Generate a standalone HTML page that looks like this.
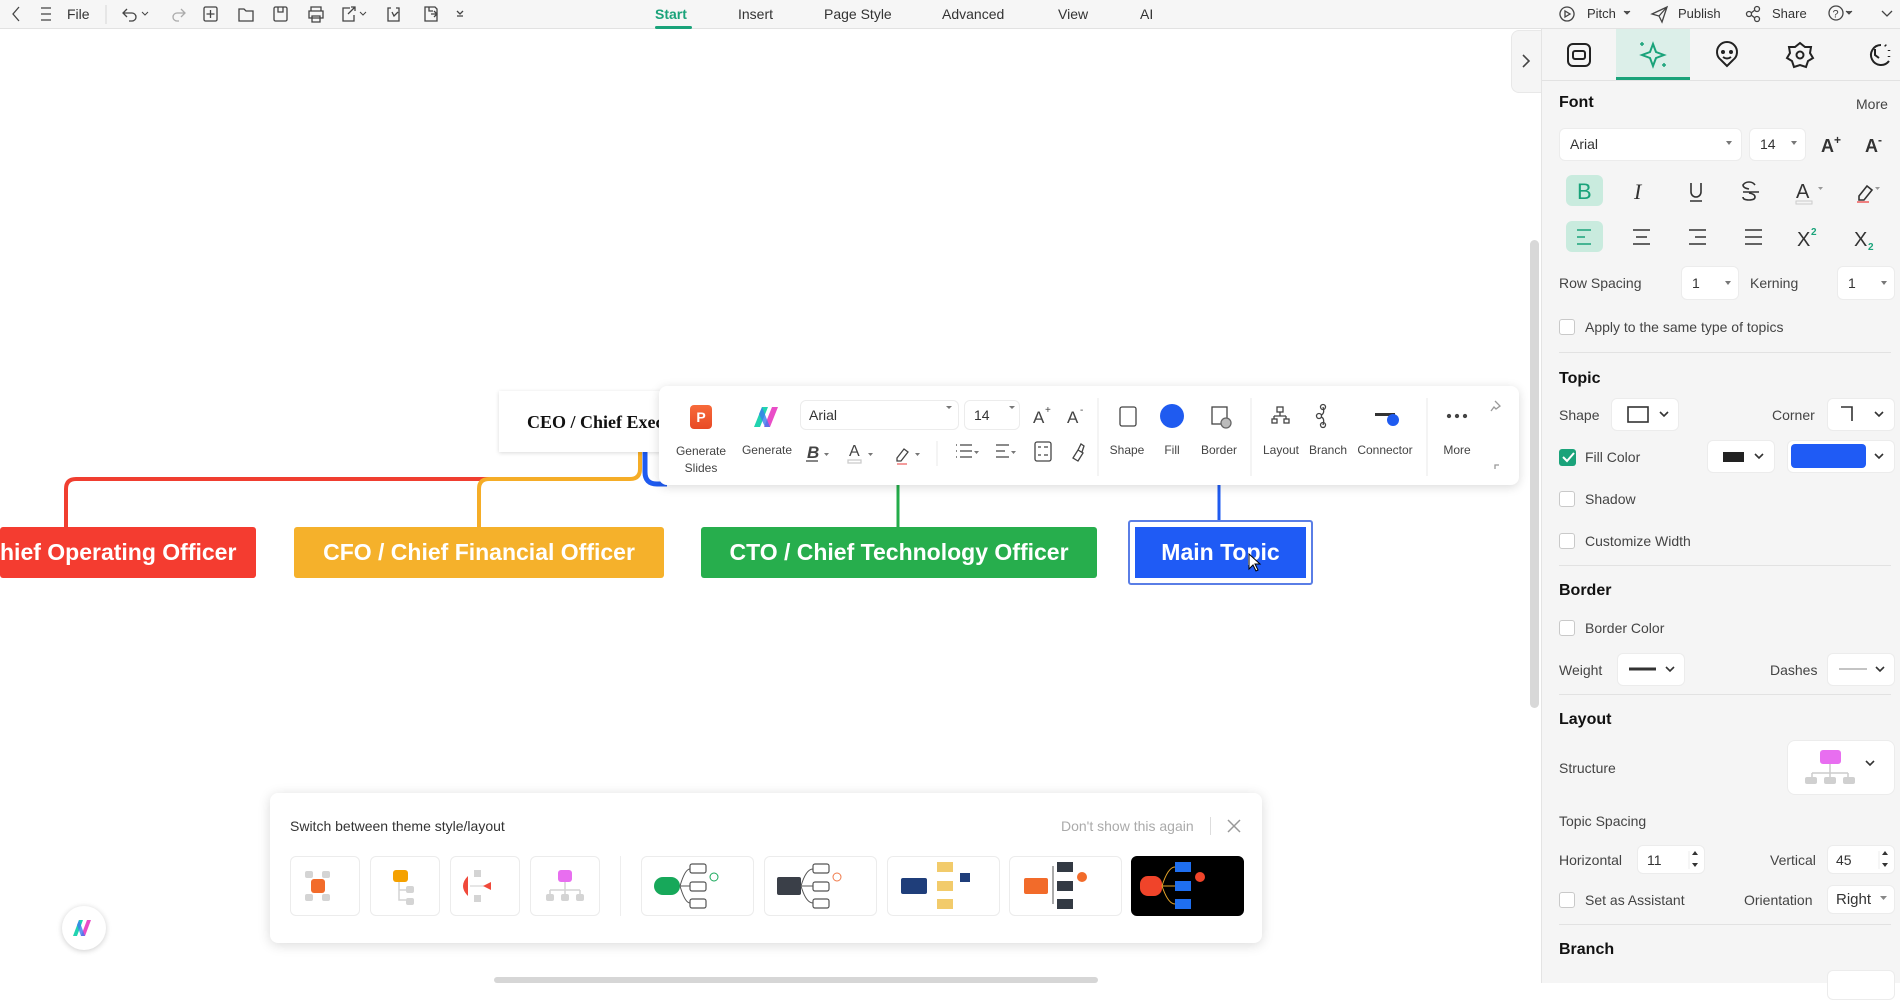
<!DOCTYPE html>
<html><head><meta charset="utf-8">
<style>
*{box-sizing:border-box;margin:0;padding:0}
body{width:1900px;height:983px;overflow:hidden;background:#fff;font-family:"Liberation Sans",Arial,sans-serif;position:relative;color:#333}
.a{position:absolute}
.top{left:0;top:0;width:1900px;height:29px;background:#f6f6f6;border-bottom:1px solid #e2e2e2}
.t{position:absolute;font-size:14px;color:#333;top:6px;white-space:nowrap}
svg{position:absolute;overflow:visible}
.panel{left:1541px;top:29px;width:359px;height:954px;background:#f5f5f5;border-left:1px solid #e4e4e4}
.p{position:absolute;font-size:14px;color:#444;white-space:nowrap}
.h{position:absolute;font-size:16px;font-weight:bold;color:#111}
.box{position:absolute;background:#fff;border:1px solid #ececec;border-radius:6px}
.cb{position:absolute;width:16px;height:16px;border:1px solid #c9c9c9;border-radius:3px;background:#fff}
.sep{position:absolute;left:1559px;width:332px;height:1px;background:#e2e2e2}
.topic{position:absolute;top:527px;height:51px;border-radius:3px;color:#fff;font-weight:bold;font-size:23px;line-height:51px;text-align:center;white-space:nowrap;overflow:hidden}
.tb{position:absolute;font-size:12px;color:#444;text-align:center;white-space:nowrap}
.th{position:absolute;top:856px;height:60px;border:1px solid #ececec;border-radius:6px;background:#fff}
</style></head><body>

<div class="a top"></div>
<svg width="1900" height="29" style="left:0;top:0" fill="none" stroke="#444" stroke-width="1.3">
<path d="M19 7l-6 7 6 7"/>
<path d="M41 8h10M41 14h10M41 20h10"/>
<line x1="106" y1="5" x2="106" y2="24" stroke="#ddd"/>
<path d="M127 9l-4 4 4 4M123 13h9a4 4 0 0 1 0 8h-3"/><path d="M142 12l3 3 3-3" stroke-width="1"/>
<path d="M181 9l4 4-4 4M185 13h-8a4 4 0 0 0 0 8h2" stroke="#aaa"/>
<rect x="204" y="7" width="13" height="14" rx="1.5"/><path d="M210.5 10v8M206.5 14h8"/>
<path d="M239 9h5l2 2h7v10h-14z"/>
<rect x="274" y="7" width="13" height="14" rx="1.5"/><path d="M278 7v5h5V7"/>
<path d="M311 11V7h10v4M309 11h14v7h-14zM312 16h8v6h-8z"/>
<path d="M350 8h-7v13h11v-6M348 14l7-7M351 7h4v4"/><path d="M360 12l3 3 3-3" stroke-width="1"/>
<path d="M391 8h-3v13h11V8h-3M392 12l2 4 4-4"/>
<path d="M425 7h10l2 2v12h-12zM429 7v4h4M431 14h6M434 11l3 3-3 3"/>
<path d="M457 11l3 3 3-3M457 16h6"/>
<path d="M1567 7a7 7 0 1 0 0.01 0z"/><path d="M1565 11v6l5-3z"/>
<path d="M1624 11l3 3 3-3" fill="#555" stroke-width="1"/>
<path d="M1652 14l15-7-5 15-3-6z M1659 16l8-9"/>
<circle cx="1749" cy="14" r="2.5"/><circle cx="1757" cy="9" r="2.5"/><circle cx="1757" cy="19" r="2.5"/><path d="M1751 13l4-3M1751 15l4 3"/>
<circle cx="1836" cy="13" r="7"/><text x="1832.5" y="17.5" font-size="11" fill="#444" stroke="none">?</text><path d="M1846 11l3 3 3-3" fill="#555" stroke-width="1"/>
<path d="M1882 11l5 5 5-5"/>
</svg>
<div class="t" style="left:67px">File</div>
<div class="t" style="left:655px;color:#1aa37a;font-weight:bold">Start</div>
<div class="a" style="left:655px;top:26px;width:37px;height:3px;background:#1aa37a;border-radius:2px"></div>
<div class="t" style="left:738px">Insert</div>
<div class="t" style="left:824px">Page Style</div>
<div class="t" style="left:942px">Advanced</div>
<div class="t" style="left:1058px">View</div>
<div class="t" style="left:1140px">AI</div>
<div class="t" style="left:1587px;font-size:13px">Pitch</div>
<div class="t" style="left:1678px;font-size:13px">Publish</div>
<div class="t" style="left:1772px;font-size:13px">Share</div>

<svg width="1540" height="983" style="left:0;top:0" fill="none" stroke-width="4">
<path d="M66 527V489q0-10 10-10H630" stroke="#f03e30"/>
<path d="M479 527V489q0-10 10-10H630q10 0 10-10v-17" stroke="#f5ad27"/>
<path d="M645 452v20q0 12 12 12h10" stroke="#1f5bf0" stroke-width="5"/>
<path d="M898 484v43" stroke="#23ac4a" stroke-width="3"/>
<path d="M1219 484v36" stroke="#1f5bf0" stroke-width="3"/>
</svg>

<div class="a" style="left:499px;top:391px;width:170px;height:61px;background:#fff;box-shadow:0 1px 4px rgba(0,0,0,.15)"></div>
<div class="a" style="left:527px;top:412px;font-family:'Liberation Serif',serif;font-weight:bold;font-size:18px;color:#111;white-space:nowrap">CEO / Chief Exec</div>

<div class="topic" style="left:0;width:256px;background:#f43c30;text-align:right;padding-right:26px">hief Operating Officer</div>
<div class="topic" style="left:294px;width:370px;background:#f5b12b">CFO / Chief Financial Officer</div>
<div class="topic" style="left:701px;width:396px;background:#27ae4d">CTO / Chief Technology Officer</div>
<div class="a" style="left:1128px;top:520px;width:185px;height:65px;border:2px solid #5a7ee6;border-radius:3px"></div>
<div class="topic" style="left:1135px;width:171px;background:#1f5bf5;border-radius:0">Main Topic</div>
<svg width="20" height="20" style="left:1248px;top:553px"><path d="M1 1v15l4-4 3 6 2-1-3-6h5z" fill="#fff" stroke="#000" stroke-width="1"/></svg>

<div class="a" style="left:659px;top:386px;width:860px;height:99px;background:#fff;border-radius:8px;box-shadow:0 2px 10px rgba(0,0,0,.15)"></div>
<div class="a" style="left:690px;top:405px;width:22px;height:24px;background:linear-gradient(#f76a3a,#e84a25);border-radius:4px;color:#fff;font-weight:bold;font-size:14px;text-align:center;line-height:24px">P</div>
<svg width="30" height="24" style="left:752px;top:405px"><path d="M2 22L10 2h6L8 22z" fill="#21d3b0"/><path d="M12 22L20 2h6l-8 20z" fill="#e94dc7"/><path d="M10 2l8 20h-5L7 9z" fill="#3b7cf0" opacity=".8"/></svg>
<div class="box" style="left:800px;top:400px;width:159px;height:30px;border-radius:6px"></div>
<div class="p" style="left:809px;top:407px;font-size:14px;color:#333">Arial</div>
<div class="box" style="left:964px;top:400px;width:56px;height:30px;border-radius:6px"></div>
<div class="p" style="left:974px;top:407px;color:#333">14</div>
<svg width="900" height="100" style="left:659px;top:386px" fill="none" stroke="#444" stroke-width="1.3">
<path d="M287 20h6l-3 3zM350 20h6l-3 3z" fill="#777" stroke="none"/>
<text x="374" y="37" font-size="17" fill="#444" stroke="none" font-family="Liberation Sans">A</text><text x="386" y="27" font-size="10" fill="#444" stroke="none">+</text>
<text x="408" y="37" font-size="17" fill="#444" stroke="none" font-family="Liberation Sans">A</text><text x="421" y="27" font-size="10" fill="#444" stroke="none">-</text>
<line x1="439" y1="12" x2="439" y2="90" stroke="#eee"/>
<rect x="461" y="21" width="16" height="19" rx="2"/>
<circle cx="513" cy="30" r="12" fill="#1f5bf0" stroke="none"/>
<rect x="553" y="21" width="15" height="17"/><circle cx="567" cy="37" r="5" fill="#bbb" stroke="#666"/>
<line x1="592" y1="12" x2="592" y2="90" stroke="#eee"/>
<rect x="618" y="21" width="6" height="5"/><path d="M621 26v4M615 30h12M615 30v3M627 30v3"/><rect x="613" y="33" width="5" height="4"/><rect x="625" y="33" width="5" height="4"/>
<circle cx="664" cy="21" r="2.5"/><circle cx="664" cy="39" r="2.5"/><circle cx="660" cy="30" r="2.5"/><path d="M662 29q4-1 2-8M662 31q4 1 2 8"/>
<rect x="716" y="27" width="20" height="3" fill="#333" stroke="none"/><circle cx="734" cy="34" r="6" fill="#1f5bf0" stroke="none"/>
<line x1="768" y1="12" x2="768" y2="90" stroke="#eee"/>
<circle cx="790" cy="30" r="1.5" fill="#444"/><circle cx="798" cy="30" r="1.5" fill="#444"/><circle cx="806" cy="30" r="1.5" fill="#444"/>
<path d="M836 15l5 5-4 3-2-2-3 4" stroke="#999"/>
<path d="M836 83v-4h4" stroke="#999"/>
<text x="148" y="72" font-size="17" font-weight="bold" font-style="italic" fill="#444" stroke="none">B</text><path d="M147 75h12"/><path d="M165 67h5l-2.5 3z" fill="#777" stroke="none"/>
<text x="190" y="70" font-size="16" fill="#444" stroke="none">A</text><rect x="189" y="74" width="13" height="3" stroke="#ccc"/><path d="M209 67h5l-2.5 3z" fill="#777" stroke="none"/>
<path d="M238 72l7-9 4 3-7 9h-4z"/><path d="M238 78h10" stroke="#e66"/><path d="M256 67h5l-2.5 3z" fill="#777" stroke="none"/>
<line x1="278" y1="55" x2="278" y2="80" stroke="#eee"/>
<path d="M301 59h12M301 65h12M301 71h12M297 59h1M297 65h1M297 71h1"/><path d="M315 65h5l-2.5 3z" fill="#777" stroke="none"/>
<path d="M337 59h13M337 65h9M337 71h13"/><path d="M352 65h5l-2.5 3z" fill="#777" stroke="none"/>
<rect x="376" y="56" width="16" height="19" rx="2"/><path d="M379 61h3M385 61h4M379 69h3M385 69h4"/>
<path d="M414 72l5-8 5 3-5 8zM419 64l3-6 3 2-2 6"/>
</svg>
<div class="tb" style="left:671px;top:443px;line-height:17px;width:60px">Generate<br>Slides</div>
<div class="tb" style="left:737px;top:443px;width:60px">Generate</div>
<div class="tb" style="left:1107px;top:443px;width:40px">Shape</div>
<div class="tb" style="left:1152px;top:443px;width:40px">Fill</div>
<div class="tb" style="left:1194px;top:443px;width:50px">Border</div>
<div class="tb" style="left:1258px;top:443px;width:46px">Layout</div>
<div class="tb" style="left:1306px;top:443px;width:44px">Branch</div>
<div class="tb" style="left:1352px;top:443px;width:66px">Connector</div>
<div class="tb" style="left:1437px;top:443px;width:40px">More</div>

<div class="a" style="left:1530px;top:240px;width:9px;height:468px;background:#d8d8d8;border-radius:5px"></div>
<div class="a" style="left:1511px;top:30px;width:30px;height:63px;background:#f5f5f5;border:1px solid #e8e8e8;border-right:none;border-radius:8px 0 0 8px"></div>
<svg width="20" height="20" style="left:1518px;top:52px"><path d="M5 3l6 6-6 6" fill="none" stroke="#444" stroke-width="1.6"/></svg>
<div class="a" style="left:494px;top:977px;width:604px;height:6px;background:#d6d6d6;border-radius:3px"></div>

<div class="a" style="left:62px;top:906px;width:44px;height:44px;background:#fff;border-radius:50%;box-shadow:0 1px 6px rgba(0,0,0,.2)"></div>
<svg width="24" height="20" style="left:72px;top:918px"><path d="M1 18L7 2h4L5 18z" fill="#21d3b0"/><path d="M9 18L15 2h4l-6 16z" fill="#e94dc7"/><path d="M7 2l6 16h-4L5 7z" fill="#3b7cf0" opacity=".8"/></svg>

<div class="a" style="left:270px;top:793px;width:992px;height:150px;background:#fff;border-radius:8px;box-shadow:0 2px 12px rgba(0,0,0,.15)"></div>
<div class="p" style="left:290px;top:818px;font-size:14px;color:#333">Switch between theme style/layout</div>
<div class="p" style="left:1061px;top:818px;font-size:14px;color:#aaa">Don't show this again</div>
<div class="a" style="left:1210px;top:817px;width:1px;height:18px;background:#ddd"></div>
<svg width="16" height="16" style="left:1226px;top:818px"><path d="M2 2l12 12M14 2L2 14" stroke="#999" stroke-width="1.5"/></svg>
<div class="th" style="left:290px;width:70px"></div>
<div class="th" style="left:370px;width:70px"></div>
<div class="th" style="left:450px;width:70px"></div>
<div class="th" style="left:530px;width:70px"></div>
<div class="a" style="left:620px;top:856px;width:1px;height:60px;background:#eee"></div>
<div class="th" style="left:641px;width:113px"></div>
<div class="th" style="left:764px;width:113px"></div>
<div class="th" style="left:887px;width:113px"></div>
<div class="th" style="left:1009px;width:113px"></div>
<div class="th" style="left:1131px;width:113px;background:#000;border-color:#000"></div>
<svg width="1000" height="60" style="left:270px;top:856px" fill="none">
<g fill="#d4d4d4"><rect x="35" y="15" width="8" height="7" rx="2"/><rect x="52" y="15" width="8" height="7" rx="2"/><rect x="35" y="38" width="8" height="7" rx="2"/><rect x="52" y="38" width="8" height="7" rx="2"/></g>
<rect x="41" y="23" width="14" height="14" rx="3" fill="#f26b2a"/>
<g transform="translate(28 0)"><rect x="95" y="14" width="15" height="12" rx="3" fill="#f5a100"/><g fill="#d4d4d4"><rect x="108" y="30" width="8" height="7" rx="2"/><rect x="108" y="42" width="8" height="7" rx="2"/></g><path d="M101 26v18h7M101 34h7" stroke="#d4d4d4" stroke-width="1.5"/></g>
<path d="M198 20q-10 10 0 20z" fill="#f0493a"/><path d="M200 30h20" stroke="#ccc"/><path d="M213 30l8-4v8z" fill="#f0493a"/><rect x="204" y="14" width="7" height="7" fill="#d4d4d4"/><rect x="204" y="39" width="7" height="7" fill="#d4d4d4"/>
<rect x="288" y="14" width="14" height="12" rx="3" fill="#e86ef0"/><path d="M295 26v8M280 34h30M280 34v4M295 34v4M310 34v4" stroke="#d4d4d4" stroke-width="1.5"/><g fill="#d4d4d4"><rect x="276" y="38" width="8" height="7" rx="2"/><rect x="291" y="38" width="8" height="7" rx="2"/><rect x="306" y="38" width="8" height="7" rx="2"/></g>
<rect x="384" y="21" width="26" height="18" rx="9" fill="#17a85a"/><g stroke="#555" stroke-width="1.2"><rect x="420" y="8" width="16" height="9" rx="2"/><rect x="420" y="26" width="16" height="9" rx="2"/><rect x="420" y="43" width="16" height="9" rx="2"/></g><path d="M410 30q5-17 10-17M410 30h10M410 30q5 17 10 17" stroke="#555"/><circle cx="444" cy="21" r="4" stroke="#17a85a"/>
<rect x="507" y="21" width="24" height="18" rx="2" fill="#3a3f48"/><g stroke="#555" stroke-width="1.2"><rect x="543" y="8" width="16" height="9" rx="2"/><rect x="543" y="26" width="16" height="9" rx="2"/><rect x="543" y="43" width="16" height="9" rx="2"/></g><path d="M531 30q5-17 12-17M531 30h12M531 30q5 17 12 17" stroke="#555"/><circle cx="567" cy="21" r="4" stroke="#f07a4a"/>
<rect x="631" y="22" width="26" height="16" rx="2" fill="#1f3e7a"/><g fill="#f2cb6b"><rect x="667" y="6" width="16" height="10"/><rect x="667" y="25" width="16" height="10"/><rect x="667" y="43" width="16" height="10"/></g><rect x="690" y="17" width="10" height="9" fill="#1f3e7a"/>
<rect x="754" y="22" width="24" height="16" rx="2" fill="#f26b2a"/><g fill="#333a44"><rect x="787" y="6" width="16" height="10"/><rect x="787" y="25" width="16" height="10"/><rect x="787" y="43" width="16" height="10"/></g><path d="M783 10v38" stroke="#555"/><circle cx="812" cy="21" r="5" fill="#f26b2a"/>
<rect x="870" y="20" width="22" height="20" rx="8" fill="#f0442a"/><g fill="#1f6ff0"><rect x="905" y="6" width="16" height="10"/><rect x="905" y="25" width="16" height="10"/><rect x="905" y="43" width="16" height="10"/></g><path d="M892 30q6-19 13-19M892 30h13M892 30q6 18 13 18" stroke="#e6a52a"/><circle cx="930" cy="21" r="5" fill="#f0442a"/>
</svg>

<div class="a panel"></div>
<div class="a" style="left:1616px;top:29px;width:74px;height:51px;background:#dcefe9"></div>
<div class="a" style="left:1616px;top:77px;width:74px;height:3px;background:#1aa37a"></div>
<div class="a" style="left:1542px;top:80px;width:358px;height:1px;background:#e2e2e2"></div>
<svg width="360" height="50" style="left:1541px;top:30px" fill="none" stroke="#222" stroke-width="2">
<rect x="27" y="14" width="22" height="22" rx="5"/><rect x="32" y="21" width="12" height="8" rx="2"/>
<path d="M112 14l3 8 8 3-8 3-3 8-3-8-8-3 8-3z" stroke="#1aa37a"/><path d="M101 12v4M99 14h4M123 33v4M121 35h4" stroke="#1aa37a" stroke-width="1.5"/>
<path d="M186 36l-6-6a10 10 0 1 1 12 0z"/><circle cx="182" cy="22" r="1" fill="#222"/><circle cx="190" cy="22" r="1" fill="#222"/><path d="M182 27q4 3 8 0"/>
<path d="M259 13l5 4 6 0-1 6 3 5-5 3-2 6-6-2-6 2-2-6-5-3 3-5-1-6 6 0z"/><circle cx="259" cy="25" r="3.5"/>
<path d="M340 15a10 10 0 1 0 8 16"/><path d="M334 19v6l4 3"/><path d="M344 15l1 1M348 20v1M348 26v1" stroke-width="2.5"/>
</svg>

<div class="h" style="left:1559px;top:94px">Font</div>
<div class="p" style="left:1856px;top:96px">More</div>
<div class="box" style="left:1559px;top:128px;width:183px;height:33px"></div>
<div class="p" style="left:1570px;top:136px;color:#333">Arial</div>
<div class="box" style="left:1749px;top:128px;width:57px;height:33px"></div>
<div class="p" style="left:1760px;top:136px;color:#333">14</div>
<svg width="360" height="60" style="left:1541px;top:128px"><path d="M185 13h6l-3 4zM250 13h6l-3 4z" fill="#777"/>
<text x="280" y="24" font-size="18" font-weight="bold" fill="#333">A</text><text x="293" y="16" font-size="12" font-weight="bold" fill="#333">+</text>
<text x="324" y="24" font-size="18" font-weight="bold" fill="#333">A</text><text x="337" y="16" font-size="12" font-weight="bold" fill="#333">-</text></svg>

<div class="a" style="left:1566px;top:175px;width:37px;height:31px;background:#c9ebde;border-radius:6px"></div>
<div class="a" style="left:1566px;top:221px;width:37px;height:31px;background:#c9ebde;border-radius:6px"></div>
<svg width="360" height="110" style="left:1541px;top:170px" fill="none" stroke="#333" stroke-width="1.6">
<text x="36" y="29" font-size="22" fill="#1aa37a" stroke="none" font-family="Liberation Sans">B</text>
<text x="93" y="29" font-size="22" font-style="italic" fill="#333" stroke="none" font-family="Liberation Serif">I</text>
<path d="M150 13v9a5 5 0 0 0 10 0v-9M149 31h12"/>
<path d="M214 15q-2-3-6-3t-6 3q0 3 6 4M202 22h16M208 23q6 1 6 4t-6 3-6-3"/>
<text x="255" y="28" font-size="20" fill="#333" stroke="none">A</text><rect x="255" y="31" width="16" height="3" stroke="#ccc" stroke-width="1"/><path d="M277 17h5l-2.5 3z" fill="#999" stroke="none"/>
<path d="M318 26l8-10 5 4-8 10h-5z"/><path d="M316 32h12" stroke="#e66"/><path d="M334 17h5l-2.5 3z" fill="#999" stroke="none"/>
<path d="M36 60h14M36 67h8M36 74h14" stroke="#1aa37a"/>
<path d="M92 60h17M95 67h11M92 74h17"/>
<path d="M148 60h17M154 67h11M148 74h17"/>
<path d="M204 60h17M204 67h17M204 74h17"/>
<text x="256" y="76" font-size="20" fill="#333" stroke="none">X</text><text x="270" y="65" font-size="10" font-weight="bold" fill="#1aa37a" stroke="none">2</text>
<text x="313" y="76" font-size="20" fill="#333" stroke="none">X</text><text x="327" y="80" font-size="10" font-weight="bold" fill="#1aa37a" stroke="none">2</text>
</svg>

<div class="p" style="left:1559px;top:275px">Row Spacing</div>
<div class="box" style="left:1681px;top:266px;width:58px;height:34px"></div>
<div class="p" style="left:1692px;top:275px;color:#333">1</div>
<div class="p" style="left:1750px;top:275px">Kerning</div>
<div class="box" style="left:1837px;top:266px;width:58px;height:34px"></div>
<div class="p" style="left:1848px;top:275px;color:#333">1</div>
<svg width="360" height="20" style="left:1541px;top:275px"><path d="M184 6h6l-3 4zM340 6h6l-3 4z" fill="#777"/></svg>

<div class="cb" style="left:1559px;top:319px"></div>
<div class="p" style="left:1585px;top:319px">Apply to the same type of topics</div>
<div class="sep" style="top:352px"></div>

<div class="h" style="left:1559px;top:370px">Topic</div>
<div class="p" style="left:1559px;top:407px">Shape</div>
<div class="box" style="left:1611px;top:398px;width:68px;height:33px"></div>
<div class="p" style="left:1772px;top:407px">Corner</div>
<div class="box" style="left:1827px;top:398px;width:68px;height:33px"></div>
<div class="a" style="left:1559px;top:449px;width:17px;height:17px;background:#1aa37a;border-radius:3px"></div>
<div class="p" style="left:1585px;top:449px">Fill Color</div>
<div class="box" style="left:1707px;top:440px;width:68px;height:33px"></div>
<div class="box" style="left:1787px;top:440px;width:108px;height:33px"></div>
<div class="a" style="left:1791px;top:444px;width:75px;height:24px;background:#1f5bf5;border-radius:4px"></div>
<svg width="360" height="90" style="left:1541px;top:398px" fill="none" stroke="#333" stroke-width="1.6">
<rect x="87" y="9" width="20" height="15"/><path d="M119 14l4 4 4-4"/>
<path d="M300 9h11v14"/><path d="M334 14l4 4 4-4"/>
<path d="M22 59l4 4 7-8" stroke="#fff" stroke-width="2"/>
<rect x="182" y="54" width="21" height="10" fill="#222" stroke="none"/><path d="M214 56l4 4 4-4"/>
<path d="M334 56l4 4 4-4"/>
</svg>
<div class="cb" style="left:1559px;top:491px"></div>
<div class="p" style="left:1585px;top:491px">Shadow</div>
<div class="cb" style="left:1559px;top:533px"></div>
<div class="p" style="left:1585px;top:533px">Customize Width</div>
<div class="sep" style="top:565px"></div>

<div class="h" style="left:1559px;top:582px">Border</div>
<div class="cb" style="left:1559px;top:620px"></div>
<div class="p" style="left:1585px;top:620px">Border Color</div>
<div class="p" style="left:1559px;top:662px">Weight</div>
<div class="box" style="left:1617px;top:653px;width:68px;height:33px"></div>
<div class="p" style="left:1770px;top:662px">Dashes</div>
<div class="box" style="left:1827px;top:653px;width:68px;height:33px"></div>
<svg width="360" height="40" style="left:1541px;top:653px" fill="none" stroke="#333" stroke-width="1.6">
<path d="M88 16h27" stroke-width="3"/><path d="M125 14l4 4 4-4"/>
<path d="M298 16h28" stroke="#888" stroke-width="1"/><path d="M335 14l4 4 4-4"/>
</svg>
<div class="sep" style="top:694px"></div>

<div class="h" style="left:1559px;top:711px">Layout</div>
<div class="p" style="left:1559px;top:760px">Structure</div>
<div class="box" style="left:1787px;top:740px;width:108px;height:55px;border-radius:8px"></div>
<svg width="110" height="56" style="left:1787px;top:740px" fill="none">
<rect x="33" y="10" width="21" height="14" rx="3" fill="#e86ef0"/>
<path d="M43 24v9M25 33h36M25 33v4M43 33v4M61 33v4" stroke="#ccc" stroke-width="1.5"/>
<g fill="#d0d0d0"><rect x="18" y="37" width="12" height="7" rx="2"/><rect x="37" y="37" width="12" height="7" rx="2"/><rect x="56" y="37" width="12" height="7" rx="2"/></g>
<path d="M79 21l4 4 4-4" stroke="#333" stroke-width="1.6"/>
</svg>
<div class="p" style="left:1559px;top:813px">Topic Spacing</div>
<div class="p" style="left:1559px;top:852px">Horizontal</div>
<div class="box" style="left:1637px;top:845px;width:68px;height:29px"></div>
<div class="p" style="left:1647px;top:852px;color:#333">11</div>
<div class="p" style="left:1770px;top:852px">Vertical</div>
<div class="box" style="left:1827px;top:845px;width:68px;height:29px"></div>
<div class="p" style="left:1836px;top:852px;color:#333">45</div>
<svg width="360" height="30" style="left:1541px;top:845px"><path d="M151 10l3-4 3 4zM151 18l3 4 3-4zM341 10l3-4 3 4zM341 18l3 4 3-4z" fill="#333"/><path d="M148 6v18M338 6v18" stroke="#eee"/></svg>
<div class="cb" style="left:1559px;top:892px"></div>
<div class="p" style="left:1585px;top:892px">Set as Assistant</div>
<div class="p" style="left:1744px;top:892px">Orientation</div>
<div class="box" style="left:1827px;top:885px;width:68px;height:29px"></div>
<div class="p" style="left:1836px;top:891px;color:#333;font-size:15px">Right</div>
<svg width="20" height="10" style="left:1880px;top:896px"><path d="M0 0h7l-3.5 4z" fill="#888"/></svg>
<div class="sep" style="top:924px"></div>
<div class="h" style="left:1559px;top:941px">Branch</div>
<div class="box" style="left:1827px;top:970px;width:68px;height:30px"></div>
</body></html>
